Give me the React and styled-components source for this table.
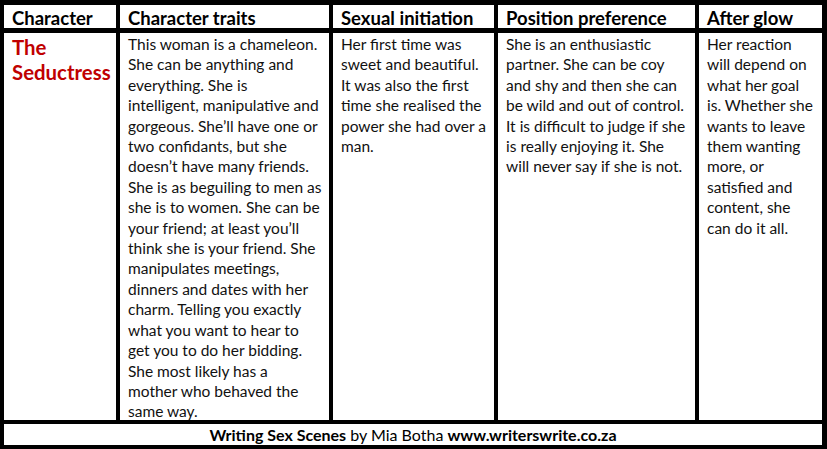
import React from 'react'
import styled, { createGlobalStyle } from 'styled-components'

const GlobalStyle = createGlobalStyle`
  html, body { margin: 0; padding: 0; background: #fff; }
  body { font-family: Lato, "Liberation Sans", sans-serif; }
`

const columns = [
  { title: 'Character', lines: [] },
  {
    title: 'Character traits',
    lines: [
      'This woman is a chameleon.',
      'She can be anything and',
      'everything. She is',
      'intelligent, manipulative and',
      'gorgeous. She\u2019ll have one or',
      'two confidants, but she',
      'doesn\u2019t have many friends.',
      'She is as beguiling to men as',
      'she is to women. She can be',
      'your friend; at least you\u2019ll',
      'think she is your friend. She',
      'manipulates meetings,',
      'dinners and dates with her',
      'charm. Telling you exactly',
      'what you want to hear to',
      'get you to do her bidding.',
      'She most likely has a',
      'mother who behaved the',
      'same way.',
    ],
  },
  {
    title: 'Sexual initiation',
    lines: [
      'Her first time was',
      'sweet and beautiful.',
      'It was also the first',
      'time she realised the',
      'power she had over a',
      'man.',
    ],
  },
  {
    title: 'Position preference',
    lines: [
      'She is an enthusiastic',
      'partner. She can be coy',
      'and shy and then she can',
      'be wild and out of control.',
      'It is difficult to judge if she',
      'is really enjoying it. She',
      'will never say if she is not.',
    ],
  },
  {
    title: 'After glow',
    lines: [
      'Her reaction',
      'will depend on',
      'what her goal',
      'is. Whether she',
      'wants to leave',
      'them wanting',
      'more, or',
      'satisfied and',
      'content, she',
      'can do it all.',
    ],
  },
]

const App = () => {
  return (
    <>
      <GlobalStyle />
      <Frame>
        <Table>
          {columns.map((c) => (
            <HeadCell key={c.title}>{c.title}</HeadCell>
          ))}
          <BodyCell>
            <Name>
              <Line>The</Line>
              <Line>Seductress</Line>
            </Name>
          </BodyCell>
          {columns.slice(1).map((c) => (
            <BodyCell key={c.title}>
              {c.lines.map((l, i) => (
                <Line key={i}>{l}</Line>
              ))}
            </BodyCell>
          ))}
        </Table>
        <Footer>
          <b>Writing Sex Scenes</b> by Mia Botha <b>www.writerswrite.co.za</b>
        </Footer>
      </Frame>
    </>
  )
}

const Frame = styled.div`
  width: 827px;
  height: 449px;
  box-sizing: border-box;
  background: #000;
  padding: 5px 5px 4px 4px;
  display: flex;
  flex-direction: column;
  gap: 4px;
`

const Table = styled.div`
  display: grid;
  grid-template-columns: 112px 209px 161px 197px 123px;
  grid-template-rows: 23px 387px;
  column-gap: 4px;
  row-gap: 5px;
`

const HeadCell = styled.div`
  background: #fff;
  padding: 0 0 0 8px;
  font-weight: 700;
  font-size: 18.5px;
  line-height: 26px;
  color: #000;
  white-space: nowrap;
  overflow: hidden;
`

const BodyCell = styled.div`
  background: #fff;
  padding: 1px 0 0 8px;
  font-size: 15.5px;
  line-height: 20.4px;
  color: #111;
  overflow: hidden;
`

const Line = styled.div`
  white-space: nowrap;
`

const Name = styled.div`
  padding-top: 1px;
  color: #c00000;
  font-weight: 700;
  font-size: 20.4px;
  line-height: 25px;
`

const Footer = styled.div`
  flex: 1;
  background: #fff;
  display: flex;
  align-items: center;
  justify-content: center;
  font-size: 16px;
  color: #000;
  white-space: pre;
  b { font-weight: 700; }
`

export default App
